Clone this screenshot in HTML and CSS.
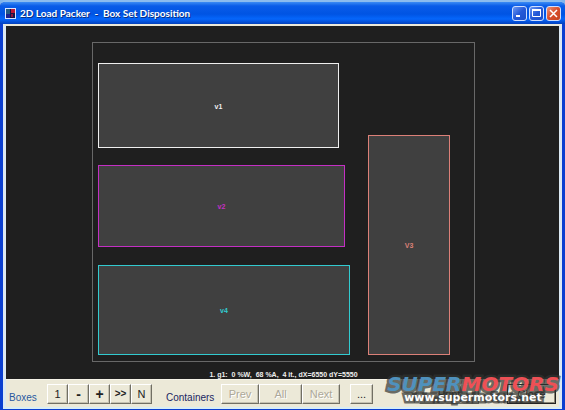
FILE: index.html
```html
<!DOCTYPE html>
<html lang="en">
<head>
<meta charset="utf-8">
<title>2D Load Packer - Box Set Disposition</title>
<link rel="stylesheet" href="styles.css">
</head>
<body>
<div class="window">
  <header class="titlebar">
    <svg class="app-icon" viewBox="0 0 11 11" aria-hidden="true">
      <rect width="11" height="11" fill="#dce6ff"/>
      <rect x="1" y="1" width="9" height="9" fill="#171447"/>
      <rect x="1" y="1" width="4" height="5" fill="#245b83"/>
      <rect x="6" y="1" width="4" height="4" fill="#bd1736"/>
      <rect x="1" y="6" width="4" height="4" fill="#1c2390"/>
      <rect x="6" y="6" width="2" height="3" fill="#8b1640"/>
    </svg>
    <h1 class="title">2D Load Packer&nbsp; -&nbsp; Box Set Disposition</h1>
    <div class="window-buttons">
      <button class="winbtn" aria-label="Minimize"><svg viewBox="0 0 13 13"><path d="M3 9h4" stroke="#fff" stroke-width="2"/></svg></button>
      <button class="winbtn" aria-label="Maximize"><svg viewBox="0 0 13 13"><path d="M2.500 3v6.500h8V3" stroke="#fff" fill="none"/><path d="M2 3h9" stroke="#fff" stroke-width="2"/></svg></button>
      <button class="winbtn winbtn-close" aria-label="Close window"><svg viewBox="0 0 13 13"><path d="M3 3l7 7M10 3l-7 7" stroke="#fff" stroke-width="1.500"/></svg></button>
    </div>
  </header>
  <main class="client">
    <section class="view">
      <div class="container">
        <div class="box v1">v1</div>
        <div class="box v2">v2</div>
        <div class="box v3">V3</div>
        <div class="box v4">v4</div>
      </div>
      <p class="status">1. g1:&nbsp; 0 %W,&nbsp; 68 %A,&nbsp; 4 it., dX=6550 dY=5550</p>
    </section>
    <footer class="toolbar">
      <span class="label label-boxes">Boxes</span>
      <div class="group group-boxes">
        <button class="btn">1</button>
        <button class="btn strong">-</button>
        <button class="btn strong">+</button>
        <button class="btn strong-small">&gt;&gt;</button>
        <button class="btn">N</button>
      </div>
      <span class="label label-containers">Containers</span>
      <div class="group group-nav">
        <button class="btn" disabled>Prev</button>
        <button class="btn" disabled>All</button>
        <button class="btn" disabled>Next</button>
      </div>
      <button class="btn more">...</button>
      <div class="group group-end">
        <button class="btn print">Print</button>
        <button class="btn close">Close</button>
      </div>
    </footer>
  </main>
</div>
<div class="watermark">
  <div class="brand"><span class="brand-super">SUPER</span><span class="brand-motors">MOTORS</span></div>
  <div class="site">www.supermotors.net</div>
</div>
</body>
</html>
```
FILE: styles.css
```css
* { box-sizing: border-box; }
body {
  margin: 0;
  background: #80b5ec;
  font-family: "Liberation Sans", Arial, sans-serif;
}
.window {
  display: flex;
  flex-direction: column;
  min-height: 100vh;
  padding: 0 3px 1px;
  background: #0b3fd0;
  border-top: 2px solid #8cbcee;
  border-radius: 6px 6px 0 0;
}
.titlebar {
  display: flex;
  align-items: center;
  height: 22px;
  margin: 0 -3px;
  padding: 0 4px 0 5px;
  border-radius: 5px 5px 0 0;
  background: linear-gradient(#3c8cf4 0, #0a5ce8 4px, #0054e3 12px, #0566fb 17px, #0340bd 22px);
}
.app-icon { width: 11px; height: 11px; }
.title {
  flex: 1;
  margin: 0 0 0 4px;
  color: #fff;
  font: 700 10px/14px Lato, sans-serif;
  text-shadow: 1px 1px #0a3080;
  white-space: nowrap;
}
.window-buttons { display: flex; gap: 2px; }
.winbtn {
  width: 15px;
  height: 15px;
  padding: 0;
  border: 1px solid #cfdfff;
  border-radius: 3px;
  background: linear-gradient(135deg, #6d99f2, #2459d8 50%, #1c4fc9);
}
.winbtn svg { display: block; width: 13px; height: 13px; }
.winbtn-close { background: linear-gradient(135deg, #ed9478, #d84e2c 50%, #c54420); }
.client {
  flex: 1;
  display: flex;
  flex-direction: column;
  border: 2px solid #ece9d8;
  border-right: 3px solid #dce9f3;
  border-left: 3px solid #dce9f3;
  border-bottom-color: #d8edf5;
  background: #ece9d8;
}
.view {
  flex: 1;
  padding: 16px 84px 0 86px;
  background: #1f1f1f;
}
.container {
  position: relative;
  height: 320px;
  border: 1px solid #686868;
}
.box {
  position: absolute;
  display: flex;
  align-items: center;
  justify-content: center;
  padding-top: 2px;
  border: 1px solid;
  background: #404040;
  font-size: 7px;
  line-height: 8px;
  font-weight: bold;
}
.v1 { left: 5px; top: 20px; width: 241px; height: 85px; color: #efefef; }
.v2 { left: 5px; top: 122px; width: 247px; height: 82px; color: #c42fc4; }
.v3 { left: 275px; top: 92px; width: 82px; height: 220px; color: #dc8078; }
.v4 { left: 5px; top: 222px; width: 252px; height: 90px; color: #32cbd0; }
.status {
  margin: 9px 0 0;
  color: #eee;
  font-size: 7px;
  line-height: 8px;
  font-weight: bold;
  text-align: center;
  white-space: nowrap;
}
.toolbar {
  display: flex;
  align-items: center;
  height: 28px;
  padding: 0 3px;
  border-top: 1px solid #f5f3e8;
}
.label { padding-top: 8px; font-size: 10px; line-height: 12px; color: #203878; }
.label-boxes { width: 38px; color: #2858a0; }
.label-containers { width: 55px; margin-left: 14px; color: #201f62; }
.group { display: flex; }
.btn {
  width: 21px;
  height: 20px;
  padding: 0;
  border: 1px solid;
  border-color: #fff #716f64 #716f64 #fff;
  box-shadow: inset -1px -1px #c5c2b2;
  background: #ece9d8;
  color: #222;
  font: 11px/16px "Liberation Sans", Arial, sans-serif;
}
.btn:disabled { color: #aca899; text-shadow: 1px 1px #fff; }
.strong { font-size: 14px; font-weight: bold; }
.strong-small { font-size: 10px; font-weight: bold; }
.group-nav .btn { width: 38px; }
.group-nav .btn:nth-child(2) { width: 43px; }
.more { margin-left: 10px; width: 23px; }
.group-end { margin-left: auto; gap: 28px; }
.print { width: 60px; }
.close { width: 49px; border-color: #222; box-shadow: inset 1px 1px #fff, inset -1px -1px #888575; }
.watermark {
  position: absolute;
  right: 5px;
  bottom: 6px;
  width: 174px;
  font-family: "DejaVu Sans", sans-serif;
  font-weight: bold;
  text-align: center;
  white-space: nowrap;
  pointer-events: none;
}
.brand, .site {
  paint-order: stroke fill;
  -webkit-text-stroke: 5px rgba(48, 50, 48, 0.7);
}
.brand { font-size: 20px; line-height: 16px; font-style: italic; }
.brand-super { color: #4f91bd; }
.brand-motors { color: #ee5055; }
.site { color: #fff; font-size: 11px; line-height: 12px; }
```
